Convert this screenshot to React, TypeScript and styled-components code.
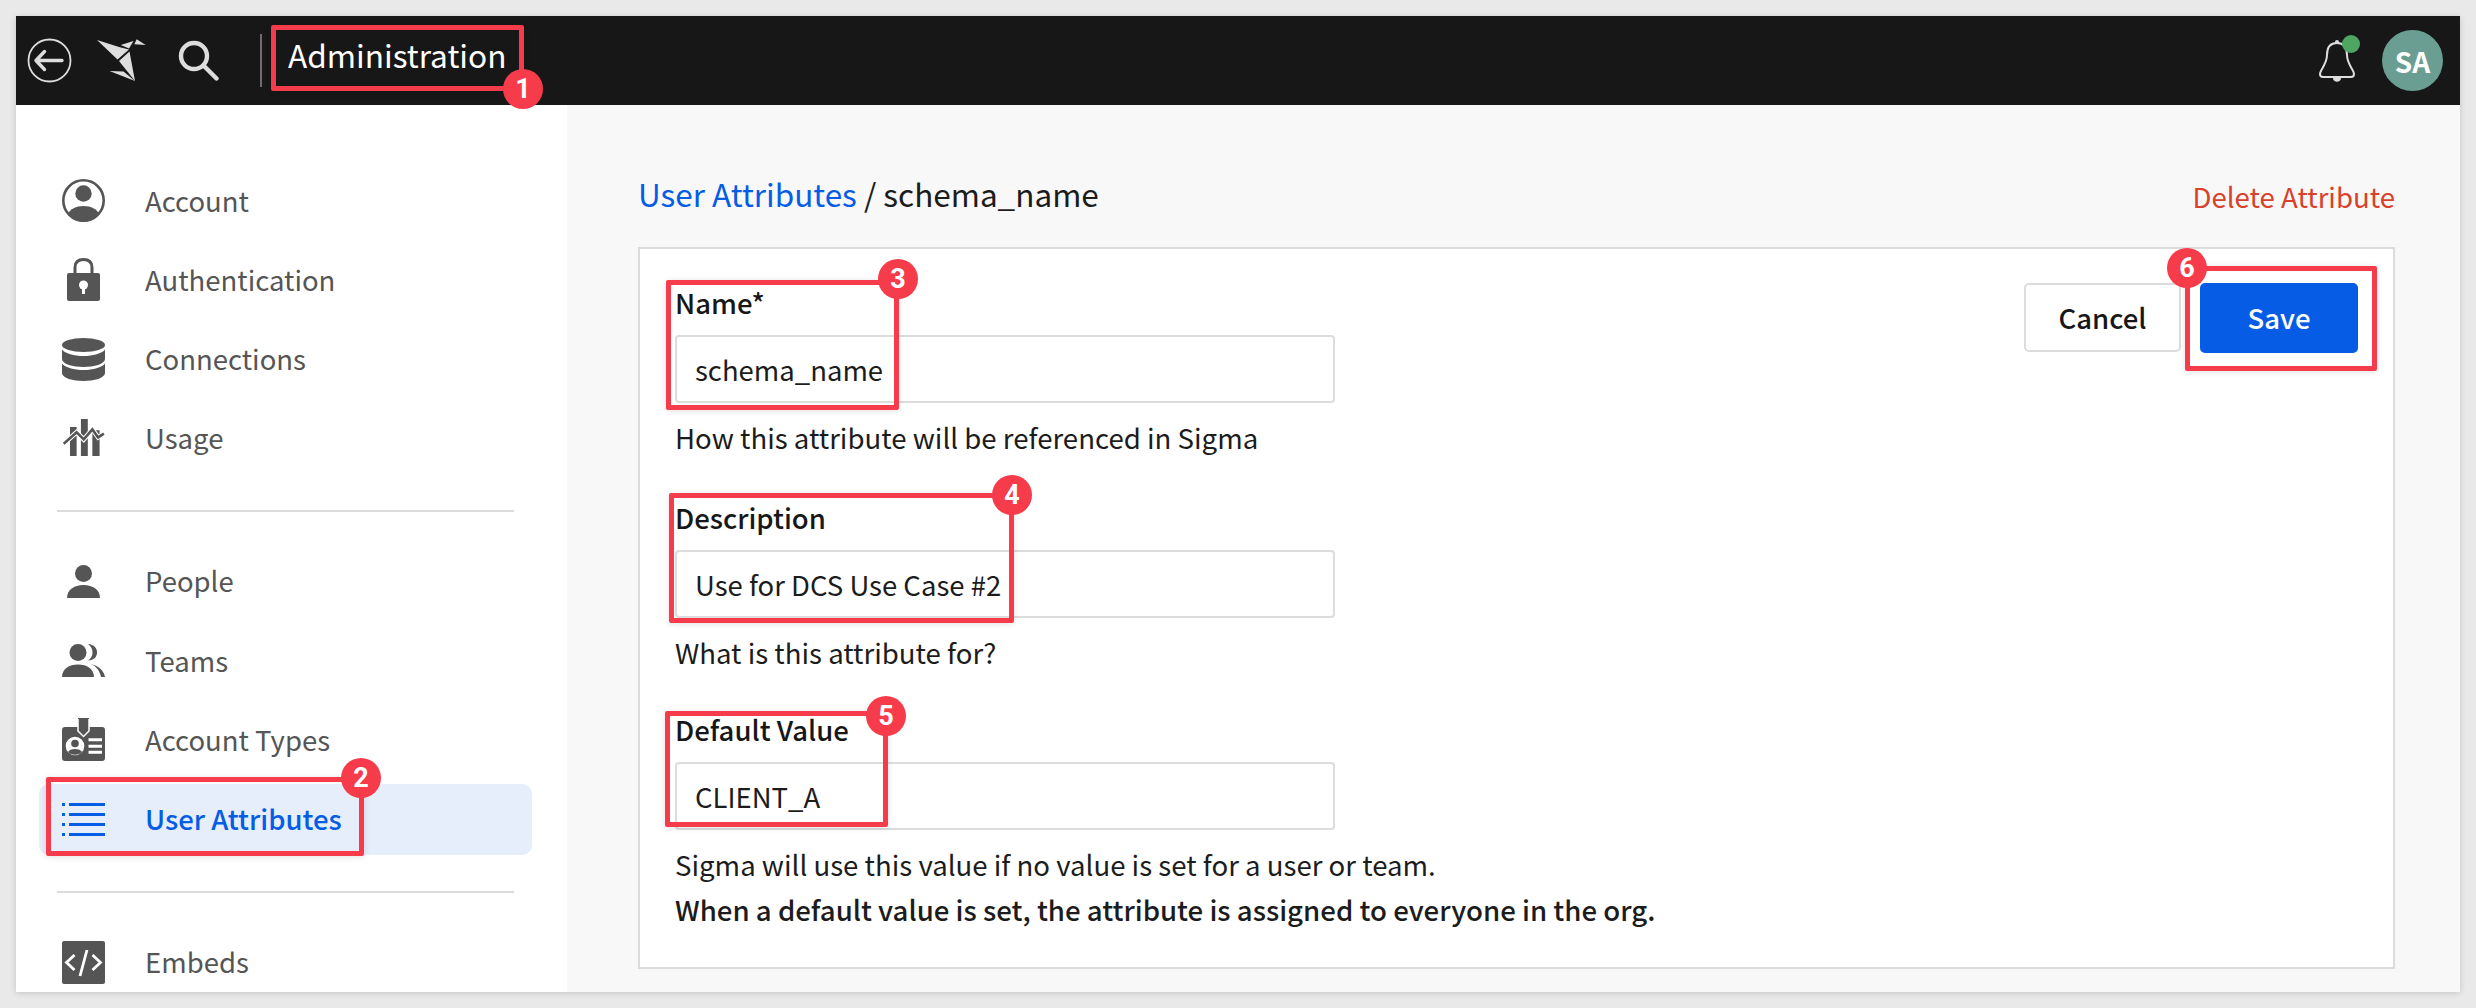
import React from "react";
import styled, { createGlobalStyle } from "styled-components";

const Global = createGlobalStyle`
  html, body { margin: 0; padding: 0; background: #e9e9e9; }
  * { box-sizing: border-box; }
  body { font-family: "Noto Sans CJK JP", "Noto Sans", sans-serif; }
`;

const Page = styled.div`
  width: 2476px; height: 1008px; padding: 16px; overflow: hidden; background: #e9e9e9;
`;
const Window = styled.div`
  position: relative; width: 2444px; height: 976px; display: flex; flex-direction: column;
  overflow: hidden; background: #f8f8f8; box-shadow: 0 1px 6px rgba(0,0,0,.16);
`;
const TopBar = styled.header`
  flex: none; height: 89px; background: #171717; display: flex; align-items: center;
  padding: 0 17px 0 11px; color: #fff;
`;
const IconSlot = styled.span<{ $w: number; $mr: number }>`
  flex: none; display: flex; width: ${p => p.$w}px; margin-right: ${p => p.$mr}px;
`;
const BarDivider = styled.span`
  flex: none; width: 2px; height: 53px; background: #6d6d6d; margin-right: 26px;
`;
const Title = styled.span`
  font-size: 31.6px; line-height: 50px; color: #fff; margin-bottom: 14px;
`;
const Spacer = styled.span`flex: 1;`;
const Bell = styled.span`
  position: relative; flex: none; width: 38px; height: 44px; margin-right: 26px; display: flex;
`;
const GreenDot = styled.span`
  position: absolute; top: -4px; right: -4px; width: 18px; height: 18px; border-radius: 50%; background: #4ea661;
`;
const Avatar = styled.span`
  flex: none; width: 61px; height: 61px; border-radius: 50%; background: #6b9e92; color: #fff;
  display: flex; align-items: center; justify-content: center; font-size: 28px; font-weight: 600;
`;
const Body = styled.div`flex: 1; display: flex; min-height: 0;`;
const Sidebar = styled.nav`
  flex: none; width: 551px; background: #fff; padding: 60px 35px 0 23px; overflow: hidden;
`;
const NavGroup = styled.div`display: flex; flex-direction: column; gap: 8.3px;`;
const NavItem = styled.div<{ $active?: boolean }>`
  height: 71px; display: flex; align-items: center; padding-left: 23px; border-radius: 10px;
  font-size: 27.5px; color: ${p => (p.$active ? "#055ce5" : "#555")};
  font-weight: ${p => (p.$active ? 500 : 400)};
  background: ${p => (p.$active ? "#e6edfb" : "transparent")};
`;
const NavIcon = styled.span`
  flex: none; width: 43px; height: 48px; margin-right: 40px; display: flex; align-items: center; justify-content: center;
`;
const NavText = styled.span`padding-bottom: 2px;`;
const NavRule = styled.hr`
  border: 0; height: 2px; background: #dcdcdc; margin: 36px 18px 34px 18px;
`;
const Main = styled.main`
  flex: 1; min-width: 0; padding: 0 65px 23px 71px; display: flex; flex-direction: column;
`;
const HeadRow = styled.div`
  flex: none; height: 142px; display: flex; align-items: center; justify-content: space-between; padding-top: 40px;
`;
const Crumbs = styled.div`font-size: 31.5px; color: #1c1c1c; margin-bottom: 7px;`;
const CrumbLink = styled.span`color: #055ce5;`;
const DeleteLink = styled.span`font-size: 27.6px; color: #d9412a;`;
const Card = styled.section`
  flex: 1; background: #fff; border: 2px solid #dcdcdc; display: flex; justify-content: space-between;
  padding: 33px 35px 0 35px;
`;
const Form = styled.div`width: 660px; display: flex; flex-direction: column;`;
const Field = styled.div<{ $mb: number }>`
  display: flex; flex-direction: column; margin-bottom: ${p => p.$mb}px;
`;
const Label = styled.label`
  font-size: 27.5px; line-height: 40px; font-weight: 500; color: #171717; margin-bottom: 13px;
`;
const ValueBox = styled.div`
  height: 68px; border: 2px solid #dcdcdc; border-radius: 4px; background: #fff; padding-left: 18px;
  display: flex; align-items: center; font-size: 27.5px; color: #1c1c1c;
`;
const Help = styled.p<{ $strong?: boolean }>`
  margin: ${p => (p.$strong ? "5px" : "14px")} 0 0; font-size: 27.6px; line-height: 40px; color: #1c1c1c;
  font-weight: ${p => (p.$strong ? 500 : 400)}; white-space: nowrap;
`;
const Actions = styled.div`display: flex; align-items: flex-start; gap: 19px; margin-top: 1px;`;
const CancelButton = styled.button`
  width: 157px; height: 69px; background: #fff; border: 2px solid #dcdcdc; border-radius: 5px; padding-bottom: 2px;
  font: 500 27.5px "Noto Sans CJK JP", sans-serif; color: #171717;
`;
const SaveButton = styled.button`
  width: 158px; height: 70px; background: #075ce6; border: 0; border-radius: 5px; padding-bottom: 3px;
  font: 500 27.5px "Noto Sans CJK JP", sans-serif; color: #fff;
`;
const Highlight = styled.div<{ $x: number; $y: number; $w: number; $h: number }>`
  position: absolute; left: ${p => p.$x - 16}px; top: ${p => p.$y - 16}px; width: ${p => p.$w}px; height: ${p => p.$h}px;
  border: 5px solid #f63b4b; border-radius: 2px; pointer-events: none;
  box-shadow: 0 1px 6px rgba(0,0,0,.12);
`;
const Badge = styled.div<{ $x: number; $y: number }>`
  position: absolute; left: ${p => p.$x - 36}px; top: ${p => p.$y - 36}px; width: 40px; height: 40px; border-radius: 50%;
  background: #f63b4b; color: #fff; display: flex; align-items: center; justify-content: center;
  font: 700 27px "Roboto", "Liberation Sans", sans-serif;
`;

const G = "#555";
const Back = () => (
  <svg width="45" height="45" viewBox="0 0 45 45" fill="none" stroke="#ddd">
    <circle cx="22.5" cy="22.5" r="21" strokeWidth="1.8" />
    <path d="M35 22.500H9M17.500 13.500l-8.500 9 8.500 9" strokeWidth="3.400" strokeLinecap="round" strokeLinejoin="round" />
  </svg>
);
const Logo = () => (
  <svg width="50" height="44" viewBox="0 0 50 44" fill="#dedede">
    <path d="M0 1 22 8 32 10.500 20.500 20.500Z" />
    <path d="M22 22 32.500 12.500 38 42Z" />
    <path d="M12.500 32 26.500 32.500 38 42Z" />
    <path d="M23.700 6 36.500 2 32 9.500Z" />
    <path d="M39.700 .3 48.700 6 37.300 5.300Z" />
  </svg>
);
const SearchIcon = () => (
  <svg width="41" height="41" viewBox="0 0 41 41" fill="none" stroke="#ddd" strokeWidth="4.400" strokeLinecap="round">
    <circle cx="16" cy="16" r="13" />
    <path d="M26 26 38.500 38.500" />
  </svg>
);
const BellIcon = () => (
  <svg width="38" height="44" viewBox="0 0 38 44" fill="none" stroke="#ddd" strokeWidth="2">
    <path d="M19 4c-7 0-10 5-10 12 0 9-7 15-7 19 0 2 1 3 3 3h28c2 0 3-1 3-3 0-4-7-10-7-19 0-7-3-12-10-12Z" strokeLinejoin="round" />
    <circle cx="19" cy="3" r="2" fill="#ddd" stroke="none" />
    <path d="M15 39c0 5 8 5 8 0Z" fill="#ddd" stroke="none" />
  </svg>
);
const AccountIcon = () => (
  <svg width="43" height="43" viewBox="0 0 43 43">
    <circle cx="21.500" cy="21.500" r="20.200" fill="none" stroke={G} strokeWidth="2.600" />
    <circle cx="21.500" cy="14.500" r="8.200" fill={G} />
    <path d="M6 35c2-5 8-8 15.500-8S35 30 37 35c-4 5-9 7.500-15.500 7.500S10 40 6 35Z" fill={G} />
  </svg>
);
const Lock = () => (
  <svg width="43" height="43" viewBox="0 0 43 43">
    <path d="M13 17V9.500C13 4 16 1.500 21.500 1.500S30 4 30 9.500V17" fill="none" stroke={G} strokeWidth="3" />
    <rect x="5" y="15" width="33" height="28" rx="2" fill={G} />
    <circle cx="21.500" cy="27" r="4.500" fill="#fff" />
    <rect x="20" y="28" width="3" height="8" fill="#fff" />
  </svg>
);
const Database = () => (
  <svg width="43" height="43" viewBox="0 0 43 43" fill={G}>
    <ellipse cx="21.500" cy="7" rx="21.500" ry="7" />
    <path d="M0 11.500C3 15.500 12 18 21.500 18S40 15.500 43 11.500V21C43 26 32 29 21.500 29S0 26 0 21Z" />
    <path d="M0 25.500C3 29.500 12 32 21.500 32S40 29.500 43 25.500V35C43 40 32 43 21.500 43S0 40 0 35Z" />
  </svg>
);
const UsageIcon = () => (
  <svg width="50" height="48" viewBox="0 0 50 48">
    <path d="M9.300 11.300H17V45H9.300ZM22 2H30V45H22ZM35.300 15H43.700V45H35.300Z" fill={G} />
    <path d="M2 30.700 17 17.300 25.300 25.700 35.300 14 42 23.300 48.700 19" fill="none" stroke="#fff" strokeWidth="5.500" />
    <path d="M2 30.700 17 17.300 25.300 25.700 35.300 14 42 23.300 48.700 19" fill="none" stroke={G} strokeWidth="3" />
  </svg>
);
const Person = () => (
  <svg width="43" height="43" viewBox="0 0 43 43" fill={G}>
    <circle cx="21.500" cy="13.500" r="8.500" />
    <path d="M5 38c0-8 7-13 16.500-13S38 30 38 38Z" />
  </svg>
);
const TeamsIcon = () => (
  <svg width="43" height="43" viewBox="0 0 43 43" fill={G}>
    <circle cx="16" cy="13.500" r="8.500" />
    <path d="M26 5c6 .5 9 4 9 8.500S32 21 26 21.500c3-2 4.500-4.500 4.500-8S29 7 26 5Z" />
    <path d="M0 38c0-8 7-12.500 16-12.500S32 30 32 38Z" />
    <path d="M29 25C37 27 42 32 43 38H39C38 32 34 27 29 25Z" />
  </svg>
);
const IdBadge = () => (
  <svg width="43" height="43" viewBox="0 0 43 43">
    <rect x="0" y="9" width="43" height="34" rx="3" fill={G} />
    <path d="M16 0H27V13L21.500 18.500 16 13Z" fill={G} stroke="#fff" strokeWidth="1.500" />
    <path d="M16 0H27" stroke={G} strokeWidth="2" />
    <circle cx="13" cy="28" r="9.300" fill="#fff" />
    <circle cx="13" cy="25.500" r="3.800" fill={G} />
    <path d="M6 34c2-4 12-4 14 0-3 3.500-11 3.500-14 0Z" fill={G} />
    <path d="M26.500 21.700H40M26.500 28.300H40M26.500 34.300H40" stroke="#fff" strokeWidth="3" />
  </svg>
);
const ListIcon = () => (
  <svg width="43" height="33" viewBox="0 0 43 33" stroke="#055ce5" strokeWidth="3">
    <path d="M7 1.500H43M7 11.500H43M7 21.500H43M7 31.500H43" />
    <path d="M0 1.500H3M0 11.500H3M0 21.500H3M0 31.500H3" />
  </svg>
);
const Embed = () => (
  <svg width="43" height="43" viewBox="0 0 43 43">
    <rect width="43" height="43" rx="2" fill={G} />
    <path d="M12.500 14 4.500 21.500 12.500 29M30.500 14 38.500 21.500 30.500 29M25 9 18 35" fill="none" stroke="#fff" strokeWidth="2.800" />
  </svg>
);

const notes: [number, number, number, number, number, number, number][] = [
  [1, 271, 25, 253, 66, 523, 89],
  [2, 46, 777, 318, 79, 361, 778],
  [3, 666, 280, 233, 130, 898, 279],
  [4, 669, 493, 345, 130, 1012, 495],
  [5, 665, 711, 223, 116, 886, 716],
  [6, 2185, 266, 192, 105, 2187, 268],
];

export default function App() {
  return (
    <Page>
      <Global />
      <Window>
        <TopBar>
          <IconSlot $w={45} $mr={25}><Back /></IconSlot>
          <IconSlot $w={50} $mr={31}><Logo /></IconSlot>
          <IconSlot $w={41} $mr={41}><SearchIcon /></IconSlot>
          <BarDivider />
          <Title>Administration</Title>
          <Spacer />
          <Bell><BellIcon /><GreenDot /></Bell>
          <Avatar>SA</Avatar>
        </TopBar>
        <Body>
          <Sidebar>
            <NavGroup>
              <NavItem><NavIcon><AccountIcon /></NavIcon><NavText>Account</NavText></NavItem>
              <NavItem><NavIcon><Lock /></NavIcon><NavText>Authentication</NavText></NavItem>
              <NavItem><NavIcon><Database /></NavIcon><NavText>Connections</NavText></NavItem>
              <NavItem><NavIcon><UsageIcon /></NavIcon><NavText>Usage</NavText></NavItem>
            </NavGroup>
            <NavRule />
            <NavGroup>
              <NavItem><NavIcon><Person /></NavIcon><NavText>People</NavText></NavItem>
              <NavItem><NavIcon><TeamsIcon /></NavIcon><NavText>Teams</NavText></NavItem>
              <NavItem><NavIcon><IdBadge /></NavIcon><NavText>Account Types</NavText></NavItem>
              <NavItem $active><NavIcon><ListIcon /></NavIcon><NavText>User Attributes</NavText></NavItem>
            </NavGroup>
            <NavRule />
            <NavGroup>
              <NavItem><NavIcon><Embed /></NavIcon><NavText>Embeds</NavText></NavItem>
            </NavGroup>
          </Sidebar>
          <Main>
            <HeadRow>
              <Crumbs><CrumbLink>User Attributes</CrumbLink> / schema_name</Crumbs>
              <DeleteLink>Delete Attribute</DeleteLink>
            </HeadRow>
            <Card>
              <Form>
                <Field $mb={40}>
                  <Label>Name*</Label>
                  <ValueBox>schema_name</ValueBox>
                  <Help>How this attribute will be referenced in Sigma</Help>
                </Field>
                <Field $mb={37}>
                  <Label>Description</Label>
                  <ValueBox>Use for DCS Use Case #2</ValueBox>
                  <Help>What is this attribute for?</Help>
                </Field>
                <Field $mb={0}>
                  <Label>Default Value</Label>
                  <ValueBox>CLIENT_A</ValueBox>
                  <Help>Sigma will use this value if no value is set for a user or team.</Help>
                  <Help $strong>When a default value is set, the attribute is assigned to everyone in the org.</Help>
                </Field>
              </Form>
              <Actions>
                <CancelButton>Cancel</CancelButton>
                <SaveButton>Save</SaveButton>
              </Actions>
            </Card>
          </Main>
        </Body>
        {notes.map(([n, x, y, w, h, bx, by]) => (
          <React.Fragment key={n}>
            <Highlight $x={x} $y={y} $w={w} $h={h} />
            <Badge $x={bx} $y={by}>{n}</Badge>
          </React.Fragment>
        ))}
      </Window>
    </Page>
  );
}
